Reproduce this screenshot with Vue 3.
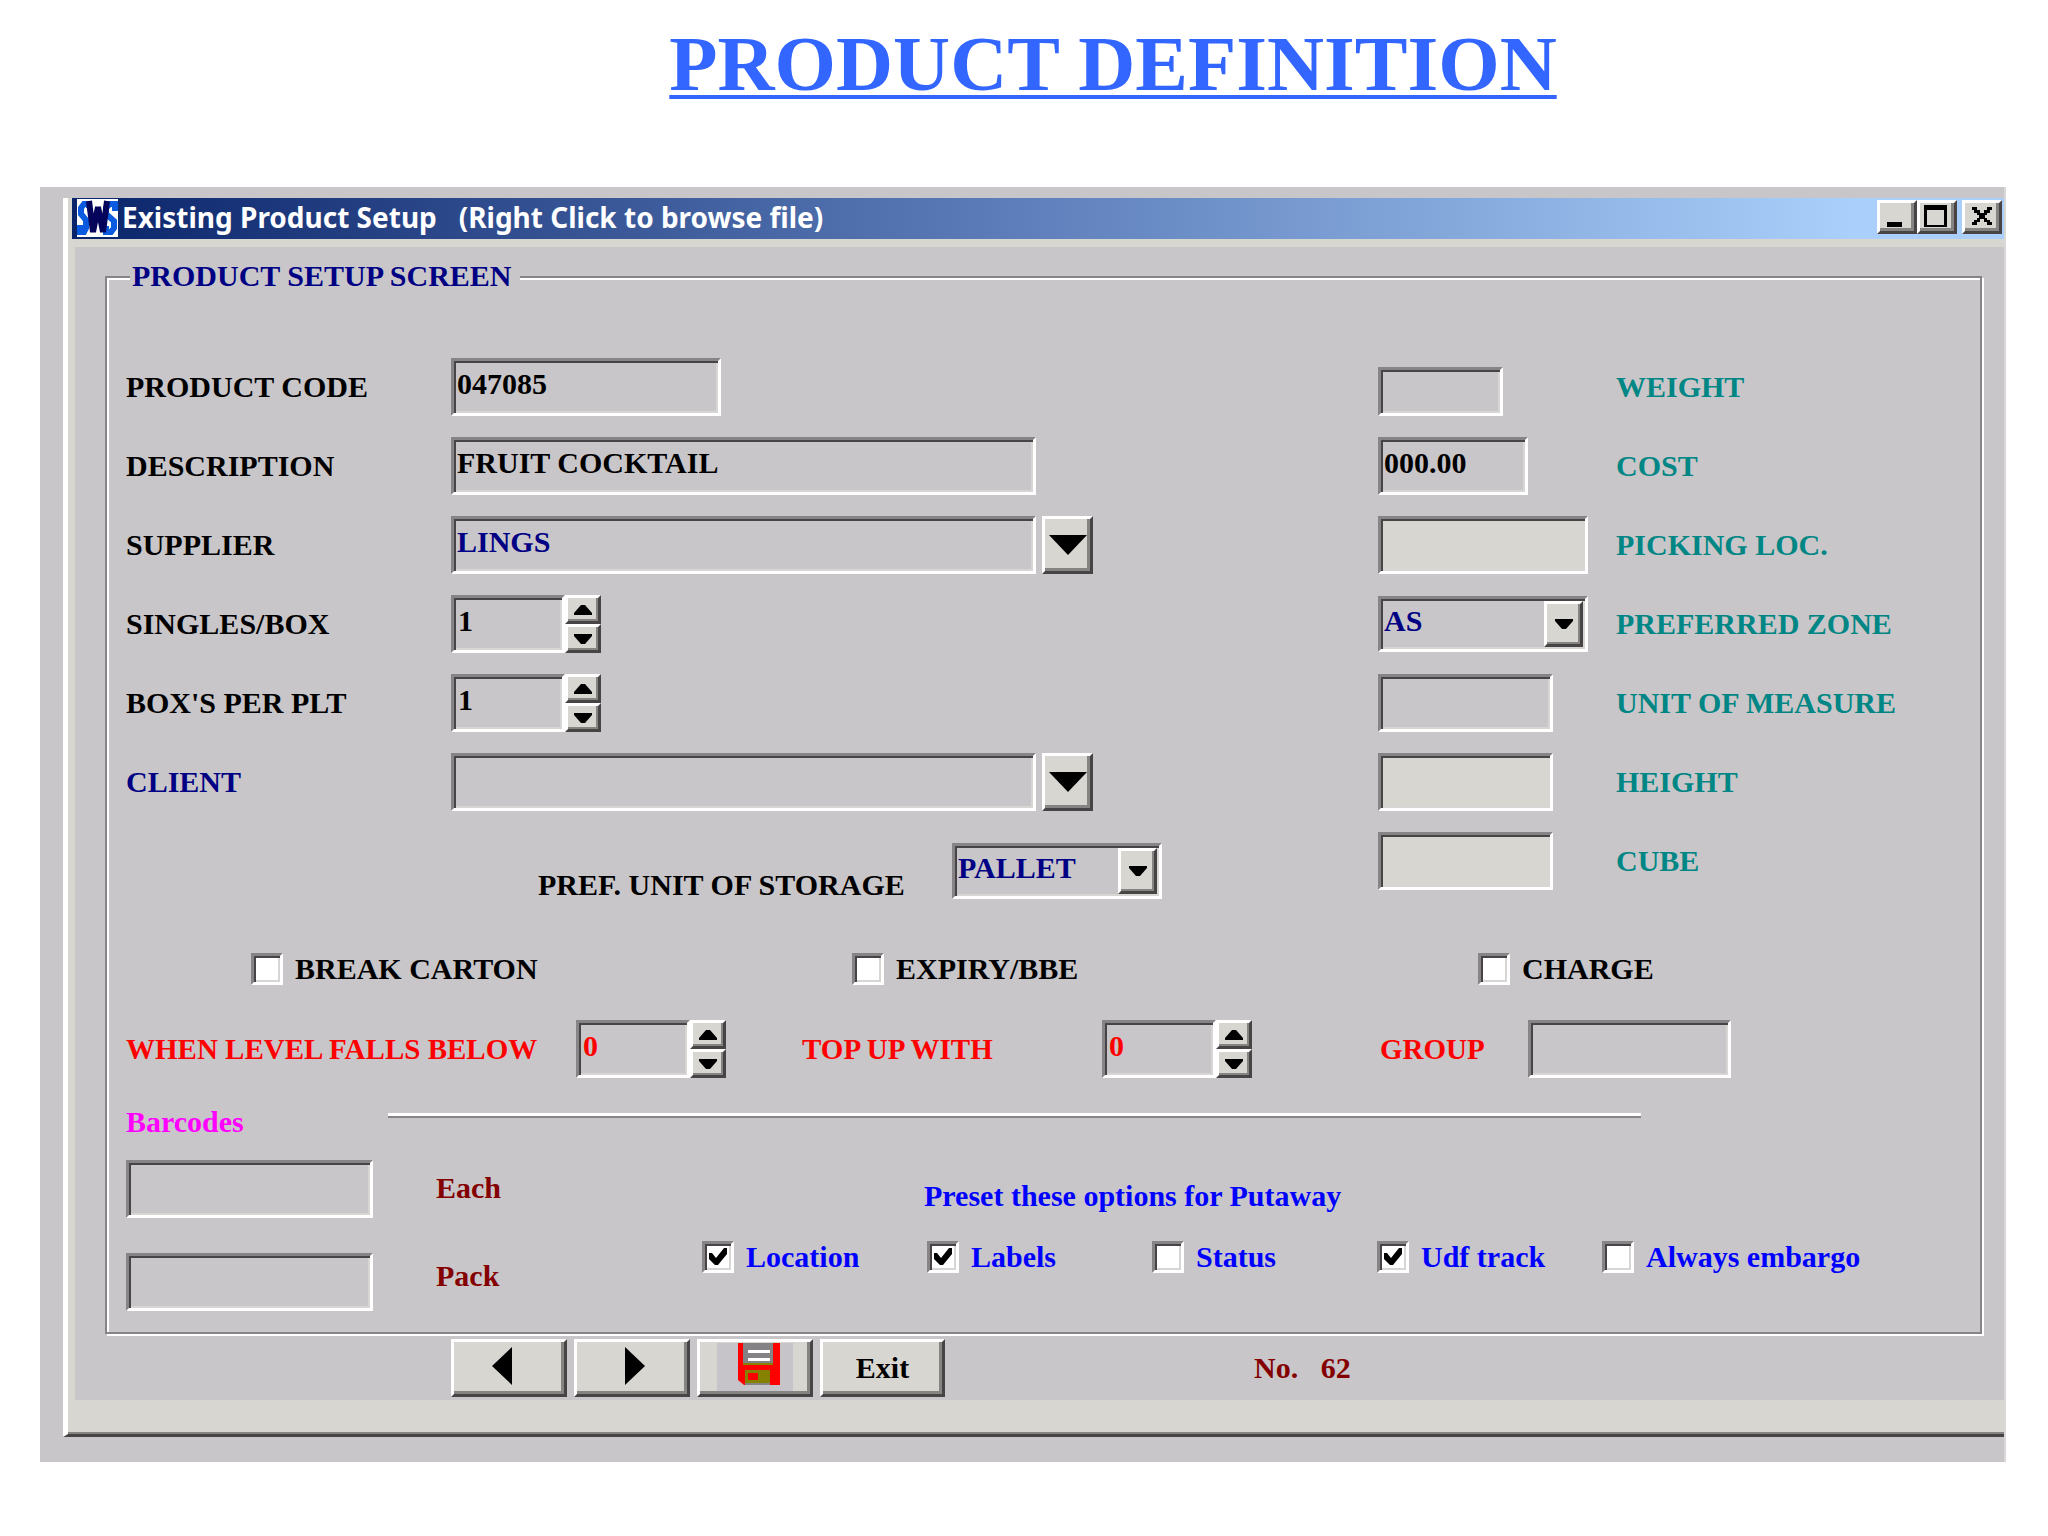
<script setup>
import { ref } from 'vue'

const caption = 'Existing Product Setup   (Right Click to browse file)'

const product = ref({
  code: '047085',
  description: 'FRUIT COCKTAIL',
  supplier: 'LINGS',
  singles: 1,
  boxes: 1,
  client: '',
  storage: 'PALLET',
  below: 0,
  topUp: 0,
  group: '',
  each: '',
  pack: ''
})

const attributes = ref([
  { id: 'weight', label: 'WEIGHT', value: '', size: 'weight' },
  { id: 'cost', label: 'COST', value: '000.00', size: 'cost' },
  { id: 'picking', label: 'PICKING LOC.', value: '', size: 'wide', locked: true },
  { id: 'zone', label: 'PREFERRED ZONE', value: 'AS', size: 'wide', options: ['AS'] },
  { id: 'uom', label: 'UNIT OF MEASURE', value: '', size: 'medium' },
  { id: 'height', label: 'HEIGHT', value: '', size: 'medium', locked: true },
  { id: 'cube', label: 'CUBE', value: '', size: 'medium', locked: true }
])

const flags = ref([
  { label: 'BREAK CARTON', on: false },
  { label: 'EXPIRY/BBE', on: false },
  { label: 'CHARGE', on: false }
])

const presets = ref([
  { label: 'Location', on: true },
  { label: 'Labels', on: true },
  { label: 'Status', on: false },
  { label: 'Udf track', on: true },
  { label: 'Always embargo', on: false }
])

function step(key, amount) {
  product.value[key] = Math.max(0, Number(product.value[key]) + amount)
}
</script>

<template>
  <main class="page">
    <h1 class="heading">PRODUCT DEFINITION</h1>

    <div class="backdrop">
      <section class="window">
        <header class="titlebar">
          <svg class="logo" viewBox="0 0 41 38" aria-hidden="true">
            <rect width="41" height="38" fill="#fff" />
            <g fill="none" stroke="#0a5be0" stroke-width="6">
              <path d="M12 9V5H7L4 9V15L9 21V29L7 33H3V26" />
              <path d="M38 12V5H33L29 9V15L37 22V29L34 33H29V27" />
            </g>
            <path d="M12 2L16 33L21 8L26 33L30 2" fill="none" stroke="#04045a" stroke-width="6" />
          </svg>
          <h2 class="caption">{{ caption }}</h2>
          <div class="controls">
            <button type="button" class="raised control" aria-label="Minimize">
              <svg viewBox="0 0 34 28"><rect x="7" y="19" width="15" height="5" /></svg>
            </button>
            <button type="button" class="raised control" aria-label="Maximize">
              <svg viewBox="0 0 34 28"><path d="M4 2H27V24H4ZM7 7V22H24V7Z" fill-rule="evenodd" /></svg>
            </button>
            <button type="button" class="raised control close" aria-label="Close">
              <svg viewBox="0 0 34 28"><path d="M7 4H12V7H15V10H19V7H22V4H27V7H25V10H22V12H20V15H22V17H25V19H27V22H22V19H19V16H15V19H12V22H7V19H9V17H12V15H14V12H12V10H9V7H7Z" /></svg>
            </button>
          </div>
        </header>

        <form class="client" @submit.prevent>
          <fieldset class="group">
            <legend>PRODUCT SETUP SCREEN</legend>

            <div class="top">
              <div class="main-fields">
                <div class="field">
                  <label for="code">PRODUCT CODE</label>
                  <input id="code" v-model="product.code" class="sunken code" type="text" />
                </div>
                <div class="field">
                  <label for="description">DESCRIPTION</label>
                  <input id="description" v-model="product.description" class="sunken long" type="text" />
                </div>
                <div class="field">
                  <label for="supplier">SUPPLIER</label>
                  <input id="supplier" v-model="product.supplier" class="sunken long navy" type="text" />
                  <button type="button" class="raised browse" aria-label="Browse suppliers">
                    <svg viewBox="0 0 38 20"><path d="M0 0H38L19 20Z" /></svg>
                  </button>
                </div>
                <div class="field">
                  <label for="singles">SINGLES/BOX</label>
                  <div class="spinner">
                    <input id="singles" v-model="product.singles" class="sunken" type="text" inputmode="numeric" />
                    <div class="arrows">
                      <button type="button" class="raised" aria-label="More singles" @click="step('singles', 1)"><svg viewBox="0 0 18 10"><path d="M0 10V8L7 0H11L18 8V10Z" /></svg></button>
                      <button type="button" class="raised" aria-label="Fewer singles" @click="step('singles', -1)"><svg viewBox="0 0 18 10"><path d="M0 0V2L7 10H11L18 2V0Z" /></svg></button>
                    </div>
                  </div>
                </div>
                <div class="field">
                  <label for="boxes">BOX'S PER PLT</label>
                  <div class="spinner">
                    <input id="boxes" v-model="product.boxes" class="sunken" type="text" inputmode="numeric" />
                    <div class="arrows">
                      <button type="button" class="raised" aria-label="More boxes" @click="step('boxes', 1)"><svg viewBox="0 0 18 10"><path d="M0 10V8L7 0H11L18 8V10Z" /></svg></button>
                      <button type="button" class="raised" aria-label="Fewer boxes" @click="step('boxes', -1)"><svg viewBox="0 0 18 10"><path d="M0 0V2L7 10H11L18 2V0Z" /></svg></button>
                    </div>
                  </div>
                </div>
                <div class="field">
                  <label for="client" class="navy">CLIENT</label>
                  <input id="client" v-model="product.client" class="sunken long" type="text" />
                  <button type="button" class="raised browse" aria-label="Browse clients">
                    <svg viewBox="0 0 38 20"><path d="M0 0H38L19 20Z" /></svg>
                  </button>
                </div>
                <div class="storage">
                  <label for="storage">PREF. UNIT OF STORAGE</label>
                  <div class="combo wide">
                    <select id="storage" v-model="product.storage" class="sunken navy">
                      <option>PALLET</option>
                    </select>
                    <span class="raised drop" aria-hidden="true"><svg viewBox="0 0 18 10"><path d="M0 0V2L7 10H11L18 2V0Z" /></svg></span>
                  </div>
                </div>
              </div>

              <div class="attributes">
                <div v-for="item in attributes" :key="item.id" class="attribute">
                  <div v-if="item.options" class="combo" :class="item.size">
                    <select :id="item.id" v-model="item.value" class="sunken navy">
                      <option v-for="option in item.options" :key="option">{{ option }}</option>
                    </select>
                    <span class="raised drop" aria-hidden="true"><svg viewBox="0 0 18 10"><path d="M0 0V2L7 10H11L18 2V0Z" /></svg></span>
                  </div>
                  <input
                    v-else
                    :id="item.id"
                    v-model="item.value"
                    type="text"
                    class="sunken"
                    :class="[item.size, { locked: item.locked }]"
                    :readonly="item.locked"
                  />
                  <label :for="item.id">{{ item.label }}</label>
                </div>
              </div>
            </div>

            <div class="flags">
              <label v-for="flag in flags" :key="flag.label" class="check">
                <span class="box">
                  <input v-model="flag.on" type="checkbox" />
                  <svg v-if="flag.on" viewBox="0 0 18 18"><path d="M0 5H3L7 10L15 0H18V6L9 17H6L0 11Z" /></svg>
                </span>
                {{ flag.label }}
              </label>
            </div>

            <div class="levels">
              <label for="below">WHEN LEVEL FALLS BELOW</label>
              <div class="spinner">
                <input id="below" v-model="product.below" class="sunken" type="text" inputmode="numeric" />
                <div class="arrows">
                  <button type="button" class="raised" aria-label="Raise level" @click="step('below', 1)"><svg viewBox="0 0 18 10"><path d="M0 10V8L7 0H11L18 8V10Z" /></svg></button>
                  <button type="button" class="raised" aria-label="Lower level" @click="step('below', -1)"><svg viewBox="0 0 18 10"><path d="M0 0V2L7 10H11L18 2V0Z" /></svg></button>
                </div>
              </div>
              <label for="topup">TOP UP WITH</label>
              <div class="spinner">
                <input id="topup" v-model="product.topUp" class="sunken" type="text" inputmode="numeric" />
                <div class="arrows">
                  <button type="button" class="raised" aria-label="Raise top up" @click="step('topUp', 1)"><svg viewBox="0 0 18 10"><path d="M0 10V8L7 0H11L18 8V10Z" /></svg></button>
                  <button type="button" class="raised" aria-label="Lower top up" @click="step('topUp', -1)"><svg viewBox="0 0 18 10"><path d="M0 0V2L7 10H11L18 2V0Z" /></svg></button>
                </div>
              </div>
              <label for="group">GROUP</label>
              <input id="group" v-model="product.group" class="sunken group-code" type="text" />
            </div>

            <div class="divider">
              <h3>Barcodes</h3>
              <hr />
            </div>

            <div class="bottom">
              <div class="barcodes">
                <div class="barcode-inputs">
                  <input id="each" v-model="product.each" class="sunken barcode" type="text" />
                  <input id="pack" v-model="product.pack" class="sunken barcode" type="text" />
                </div>
                <div class="barcode-labels">
                  <label for="each">Each</label>
                  <label for="pack">Pack</label>
                </div>
              </div>
              <div class="putaway">
                <p>Preset these options for Putaway</p>
                <div class="presets">
                  <label v-for="preset in presets" :key="preset.label" class="check">
                    <span class="box">
                      <input v-model="preset.on" type="checkbox" />
                      <svg v-if="preset.on" viewBox="0 0 18 18"><path d="M0 5H3L7 10L15 0H18V6L9 17H6L0 11Z" /></svg>
                    </span>
                    {{ preset.label }}
                  </label>
                </div>
              </div>
            </div>
          </fieldset>

          <footer class="actions">
            <button type="button" class="raised action" aria-label="Previous product">
              <svg class="arrow prev" viewBox="0 0 20 38"><path d="M20 0V38L0 19Z" /></svg>
            </button>
            <button type="button" class="raised action" aria-label="Next product">
              <svg class="arrow next" viewBox="0 0 20 38"><path d="M0 0V38L20 19Z" /></svg>
            </button>
            <button type="submit" class="raised action" aria-label="Save product">
              <svg class="disk" viewBox="0 0 76 48">
                <rect width="76" height="48" fill="#c6c4c8" />
                <path d="M21 0H63V42H27L21 37Z" fill="#f00" />
                <rect x="26" width="30" height="20" fill="#848284" />
                <rect x="26" y="20" width="30" height="2" fill="#848200" />
                <path d="M31 7H53V10H31ZM31 15H53V18H31Z" fill="#fff" />
                <rect x="28" y="27" width="25" height="13" fill="#848200" />
                <rect x="28" y="40" width="25" height="2" fill="#848284" />
                <rect x="31" y="30" width="10" height="7" fill="#f00" />
              </svg>
            </button>
            <button type="button" class="raised action exit">Exit</button>
            <output class="record">No.&nbsp;&nbsp;&nbsp;62</output>
          </footer>
        </form>
      </section>
    </div>
  </main>
</template>

<style>
body {
  margin: 0;
  background: #fff;
}
</style>

<style scoped>
.page {
  padding: 0 42px 74px 40px;
  color: #000;
  font: bold 30px/30px "Liberation Serif", "Times New Roman", serif;
}

.page * {
  box-sizing: border-box;
}

.heading {
  margin: 0;
  padding: 20px 0 79px 180px;
  color: #3366ff;
  font-size: 79px;
  line-height: 88px;
  text-align: center;
  text-decoration: underline;
  text-decoration-thickness: 4px;
  text-underline-offset: 5px;
}

.backdrop {
  padding: 11px 0 25px 23px;
  border-right: 2px solid #d9d7d8;
  background: #c8c6c8;
}

.window {
  padding-left: 4px;
  border-left: 5px solid #fff;
  border-bottom: 3px solid #484446;
  background: #d8d6d1;
  box-shadow: inset 0 -2px #868483;
}

.titlebar {
  display: flex;
  align-items: flex-start;
  height: 41px;
  padding: 1px 2px 0 5px;
  background: linear-gradient(90deg, #0a246a, #5f80bc 50%, #aacffa 92%);
}

.logo {
  width: 41px;
  height: 38px;
}

.caption {
  flex: 1;
  margin: 0;
  padding-left: 4px;
  color: #fff;
  font: bold 28px/36px "Noto Sans", "Open Sans", sans-serif;
  white-space: pre;
}

.controls {
  display: flex;
  padding-top: 1px;
}

button {
  padding: 0;
  color: #000;
  font: inherit;
}

.raised {
  display: flex;
  align-items: center;
  justify-content: center;
  border: 3px solid;
  border-color: #fff #484446 #484446 #fff;
  border-radius: 0;
  background: #d8d6d1;
  box-shadow: inset -3px -3px #868483;
}

.control {
  width: 40px;
  height: 34px;
}

.control svg {
  width: 34px;
  height: 28px;
}

.close {
  margin-left: 5px;
}

.client {
  margin: 8px 0 0 3px;
  padding: 14px 22px 3px 30px;
  background: #c9c6c9;
}

.window::after {
  content: "";
  display: block;
  height: 34px;
}

.group {
  min-width: 0;
  margin: 0;
  padding: 65px 0 21px 19px;
  border: 2px solid #868486;
  box-shadow: inset 2px 2px #fff, 2px 2px #fff;
}

legend {
  margin-left: 4px;
  padding: 0 8px 2px 2px;
  background: #c9c6c9;
  color: #000084;
}

.navy {
  color: #000084;
}

.sunken {
  height: 58px;
  margin: 0;
  padding: 0 0 6px 3px;
  border: 3px solid;
  border-color: #868486 #fff #fff #868486;
  border-radius: 0;
  outline: 0;
  background: #c9c6c9;
  box-shadow: inset 2px 2px #484446, inset -2px -2px #d8d6d4;
  font: inherit;
}

input.sunken:not(.navy) {
  color: inherit;
}

.sunken.locked {
  background: #d8d6d1;
}

.top {
  display: flex;
}

.main-fields {
  flex: 1;
}

.field {
  display: flex;
  align-items: center;
  margin-bottom: 21px;
}

.field > label {
  width: 325px;
}

.code {
  width: 270px;
}

.long {
  width: 585px;
}

.browse {
  width: 51px;
  height: 58px;
  margin-left: 6px;
}

.browse svg {
  width: 38px;
  height: 20px;
}

.spinner {
  display: flex;
  width: 150px;
}

.spinner .sunken {
  width: 114px;
  padding-left: 4px;
}

.arrows {
  display: flex;
  flex: 1;
  flex-direction: column;
}

.arrows .raised {
  height: 29px;
}

.arrows .raised,
.drop.raised {
  box-shadow: inset -2px -2px #868483;
}

.arrows svg,
.drop svg {
  width: 18px;
  height: 10px;
}

.storage {
  display: flex;
  align-items: flex-end;
  margin-top: 32px;
  padding-left: 412px;
}

.storage label {
  width: 414px;
  line-height: 28px;
}

.combo {
  position: relative;
}

.combo select {
  width: 100%;
  height: 56px;
  appearance: none;
}

.drop {
  position: absolute;
  top: 5px;
  right: 5px;
  bottom: 5px;
  width: 39px;
  pointer-events: none;
}

.weight {
  width: 125px;
  height: 49px;
  margin-top: 9px;
}

.cost {
  width: 150px;
}

.medium {
  width: 175px;
}

.wide {
  width: 210px;
}

.attributes {
  display: grid;
  grid-auto-rows: 58px;
  row-gap: 21px;
  align-content: start;
  width: 602px;
}

.attribute {
  display: grid;
  grid-template-columns: 238px 1fr;
  align-items: center;
  color: #000;
}

.attribute label {
  color: #008684;
}

.flags {
  display: grid;
  grid-template-columns: 601fr 626fr 502fr;
  margin-top: 54px;
  padding-left: 125px;
}

.check {
  display: flex;
  align-items: center;
  gap: 12px;
  white-space: nowrap;
}

.box {
  position: relative;
  width: 32px;
  height: 32px;
}

.box input {
  width: 32px;
  height: 32px;
  margin: 0;
  border: 3px solid;
  border-color: #868486 #fff #fff #868486;
  background: #fff;
  box-shadow: inset 2px 2px #484446, inset -2px -2px #d8d6d4;
  appearance: none;
}

.box svg {
  position: absolute;
  top: 7px;
  left: 7px;
  width: 18px;
  height: 18px;
  pointer-events: none;
}

.levels {
  display: grid;
  grid-template-columns: 450fr 226fr 300fr 278fr 148fr 452fr;
  align-items: center;
  margin-top: 35px;
  color: #f00;
}

.levels label {
  font-size: 29px;
}

.group-code {
  width: 203px;
}

.divider {
  display: grid;
  grid-template-columns: 262fr 1253fr 339fr;
  margin-top: 29px;
}

h3 {
  margin: 0;
  color: #f0f;
  font: inherit;
}

hr {
  width: 100%;
  height: 5px;
  margin: 6px 0 0;
  border: solid;
  border-width: 3px 0 2px;
  border-color: #fff transparent #868486;
}

.bottom {
  display: grid;
  grid-template-columns: 576fr 1278fr;
  margin-top: 23px;
}

.barcodes {
  display: flex;
  gap: 63px;
}

.barcode-inputs {
  display: grid;
  gap: 35px;
}

.barcode {
  width: 247px;
}

.barcode-labels {
  display: flex;
  flex-direction: column;
  gap: 58px;
  padding-top: 13px;
  color: #840000;
}

.putaway {
  padding-top: 21px;
  color: #00f;
}

.putaway p {
  margin: 0 0 30px;
  padding-left: 222px;
}

.presets {
  display: grid;
  grid-template-columns: repeat(4, 225fr) 378fr;
}

.actions {
  display: flex;
  align-items: center;
  gap: 7px;
  margin-top: 5px;
  padding-left: 346px;
}

.action {
  width: 116px;
  height: 58px;
}

.exit {
  width: 125px;
}

.arrow {
  width: 20px;
  height: 38px;
}

.prev {
  margin: 0 14px 4px 0;
}

.next {
  margin: 0 0 4px 6px;
}

.disk {
  width: 76px;
  height: 48px;
  margin-bottom: 2px;
}

.record {
  padding-left: 302px;
  color: #840000;
}
</style>
